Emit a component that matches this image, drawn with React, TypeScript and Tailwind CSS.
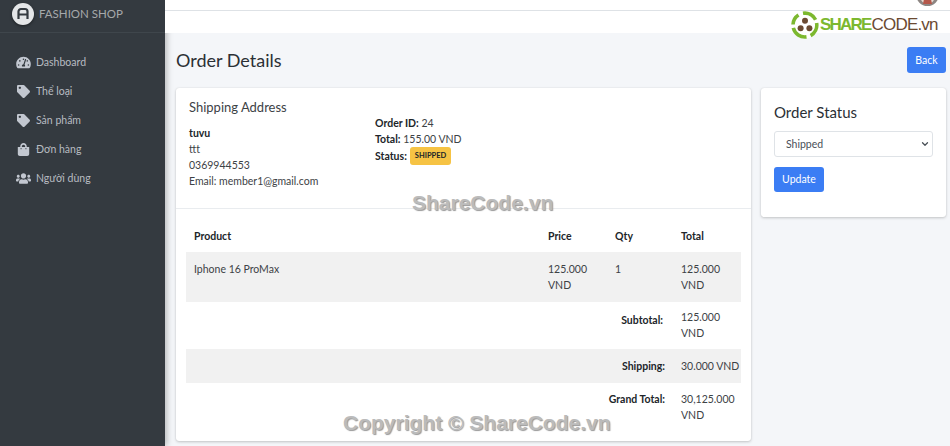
import { ChevronDown } from 'lucide-react'
import { FaTachometerAlt, FaTag, FaShoppingBag, FaUsers } from 'react-icons/fa'

const menu = [
  { label: 'Dashboard', icon: FaTachometerAlt },
  { label: 'Thể loại', icon: FaTag },
  { label: 'Sản phẩm', icon: FaTag },
  { label: 'Đơn hàng', icon: FaShoppingBag },
  { label: 'Người dùng', icon: FaUsers },
]

function Sidebar() {
  return (
    <aside className="w-[165px] shrink-0 bg-[#343a40] shadow-[2px_0_6px_rgba(0,0,0,0.25)]">
      <div className="flex h-[33px] items-start gap-[5px] border-b border-[#3f464c] pl-3 pt-[3px]">
        <div className="flex h-[22px] w-[22px] items-center justify-center rounded-full bg-[#e4e6e8] shadow-[0_1px_3px_rgba(0,0,0,0.5)]">
          <svg viewBox="0 0 14 14" className="h-[14px] w-[14px]">
            <path d="M2.5 12V4.5a2.5 2.5 0 0 1 2.5-2.5h4a2.5 2.5 0 0 1 2.5 2.5V12M2.5 7.5h9" fill="none" stroke="#343a40" strokeWidth="2.2" />
          </svg>
        </div>
        <span className="text-[11.5px] leading-[22px] text-[#a6a9ab]">FASHION SHOP</span>
      </div>
      <nav className="flex flex-col pt-[15px]">
        {menu.map((m) => (
          <a key={m.label} className="flex h-[29px] items-center pl-4 text-[10.5px] text-[#b8bcc2]">
            <m.icon className="w-[15px] text-[13px] text-[#c2c7d0]" />
            <span className="ml-[5px]">{m.label}</span>
          </a>
        ))}
      </nav>
    </aside>
  )
}

export default function App() {
  return (
    <div className="relative flex h-[446px] w-[950px] overflow-hidden bg-[#f4f6f9] font-['Lato','Noto_Sans',sans-serif] text-[#3d4246]">
      <Sidebar />
      <div className="min-w-0 flex-1">
        <header className="h-[33px] bg-white">
          <div className="h-[11px] border-b border-[#dee2e6]" />
        </header>
        <main className="pl-[11px] pr-[4px]">
          <div className="flex items-center justify-between pt-[14px]">
            <h1 className="text-[18px] leading-[26px] text-[#2b3035]">Order Details</h1>
            <button className="h-[26px] w-[39px] rounded-[3px] bg-[#3b7df4] pt-[1px] text-[10.5px] text-white">Back</button>
          </div>
          <div className="mt-[15px] flex items-start gap-[10px]">
            <section className="h-[353px] w-[575px] rounded-[3px] bg-white text-[10.5px] shadow-[0_0_1px_rgba(0,0,0,0.13),0_1px_3px_rgba(0,0,0,0.2)]">
              <div className="h-[121px] border-b border-[#e9ecef] px-[13px] pt-[10px]">
                <h2 className="text-[13px] leading-[18px]">Shipping Address</h2>
                <div className="flex">
                  <div className="w-[186px] pt-[9px] leading-[16px]">
                    <b className="text-[#212529]">tuvu</b>
                    <p>ttt</p>
                    <p>0369944553</p>
                    <p>Email: member1@gmail.com</p>
                  </div>
                  <div className="leading-[16px]">
                    <p className="mt-[-1px]"><b className="text-[#212529]">Order ID:</b> 24</p>
                    <p><b className="text-[#212529]">Total:</b> 155.00 VND</p>
                    <p className="flex items-center gap-[2px]">
                      <b className="text-[#212529]">Status:</b>
                      <span className="ml-[1px] rounded-[3px] bg-[#f6c344] px-[5px] py-[3px] text-[7.5px] font-bold leading-[12px] text-[#212529]">SHIPPED</span>
                    </p>
                  </div>
                </div>
              </div>
              <div className="px-[10px] pt-[10px]">
                <table className="w-full table-fixed leading-[16px]">
                  <colgroup>
                    <col className="w-[354px]" />
                    <col className="w-[67px]" />
                    <col className="w-[66px]" />
                    <col className="w-[68px]" />
                  </colgroup>
                  <thead className="text-[#212529]">
                    <tr className="h-[33px]">
                      <th className="px-2 text-left font-bold">Product</th>
                      <th className="px-2 text-left font-bold">Price</th>
                      <th className="px-2 text-left font-bold">Qty</th>
                      <th className="px-2 text-left font-bold">Total</th>
                    </tr>
                  </thead>
                  <tbody>
                    <tr className="bg-[#f1f1f1]">
                      <td className="px-2 pb-[9px] pt-[9px] align-top">Iphone 16 ProMax</td>
                      <td className="px-2 pb-[9px] pt-[9px] align-top">125.000 VND</td>
                      <td className="px-2 pb-[9px] pt-[9px] align-top">1</td>
                      <td className="px-2 pb-[9px] pt-[9px] align-top">125.000 VND</td>
                    </tr>
                    <tr>
                      <td />
                      <td colSpan={2} className="pr-[10px] pt-[10px] text-right align-top font-bold text-[#212529]">Subtotal:</td>
                      <td className="px-2 pb-[8px] pt-[7px] align-top">125.000 VND</td>
                    </tr>
                    <tr className="bg-[#f1f1f1]">
                      <td />
                      <td colSpan={2} className="pr-2 pt-[9px] text-right align-top font-bold text-[#212529]">Shipping:</td>
                      <td className="whitespace-nowrap px-2 pb-[9px] pt-[9px] align-top">30.000 VND</td>
                    </tr>
                    <tr>
                      <td />
                      <td colSpan={2} className="pr-2 pt-[8px] text-right align-top font-bold text-[#212529]">Grand Total:</td>
                      <td className="px-2 pb-[8px] pt-[8px] align-top">30,125.000 VND</td>
                    </tr>
                  </tbody>
                </table>
              </div>
            </section>
            <section className="h-[129px] w-[185px] rounded-[3px] bg-white px-[13px] pt-[14px] shadow-[0_0_1px_rgba(0,0,0,0.13),0_1px_3px_rgba(0,0,0,0.2)]">
              <h2 className="text-[15px] leading-[20px] text-[#2b3035]">Order Status</h2>
              <div className="mt-[9px] flex h-[26px] w-[159px] items-center justify-between rounded-[3px] border border-[#dfe3e7] pl-[11px] pr-[2px] text-[10.5px] text-[#495057]">
                <span className="pt-[1px]">Shipped</span>
                <ChevronDown size={10} strokeWidth={3} />
              </div>
              <button className="mt-[10px] h-[25px] w-[50px] rounded-[3px] bg-[#3b7df4] pt-[1px] text-[10.5px] text-white">Update</button>
            </section>
          </div>
        </main>
      </div>
      {/* avatar cut off by the top edge */}
      <div className="absolute right-[11px] top-[-17px] h-[23px] w-[23px] overflow-hidden rounded-full bg-[#8d8683]">
        <svg viewBox="0 0 23 23" className="h-full w-full">
          <circle cx="11.5" cy="14" r="7" fill="#e8dcd3" />
          <path d="M7 21h9l-1-5h-7z" fill="#b5574a" />
        </svg>
      </div>
      {/* sharecode logo + watermark over the page */}
      <div className="absolute left-[791px] top-[11px] flex items-center">
        <svg viewBox="0 0 28 28" className="h-[28px] w-[28px]">
          <circle cx="14" cy="14" r="13.5" fill="#fff" />
          <path d="M12 2.3a12 12 0 0 1 12.6 6.4M25.6 12a12 12 0 0 1-6 12.6M15.5 25.9a12 12 0 0 1-13.2-9M2 13.5a12 12 0 0 1 5.5-9.6" fill="none" stroke="#7cb82f" strokeWidth="3.6" />
          <circle cx="14" cy="9.8" r="3" fill="#6b4a32" />
          <circle cx="9.6" cy="17.2" r="3" fill="#6b4a32" />
          <circle cx="18.4" cy="17.2" r="3" fill="#6b4a32" />
          <circle cx="14" cy="14.5" r="1.3" fill="#fff" />
        </svg>
        <span className="ml-[1px] font-['Liberation_Sans',sans-serif] text-[17px] font-bold tracking-[-1.8px] text-[#7cb82f]">SHARE</span>
        <span className="ml-[1px] font-['Liberation_Sans',sans-serif] text-[17px] tracking-[-0.8px] text-[#6b4a32]">CODE.vn</span>
      </div>
      <span className="absolute left-[412px] top-[187px] font-['Liberation_Sans',sans-serif] text-[21px] font-bold text-[#bbbbbb] [text-shadow:1px_1px_1px_#999]">ShareCode.vn</span>
      <span className="absolute left-[343px] top-[407px] font-['Liberation_Sans',sans-serif] text-[21px] font-bold text-[#bbbbbb] [text-shadow:1px_1px_1px_#999]">Copyright © ShareCode.vn</span>
    </div>
  )
}
